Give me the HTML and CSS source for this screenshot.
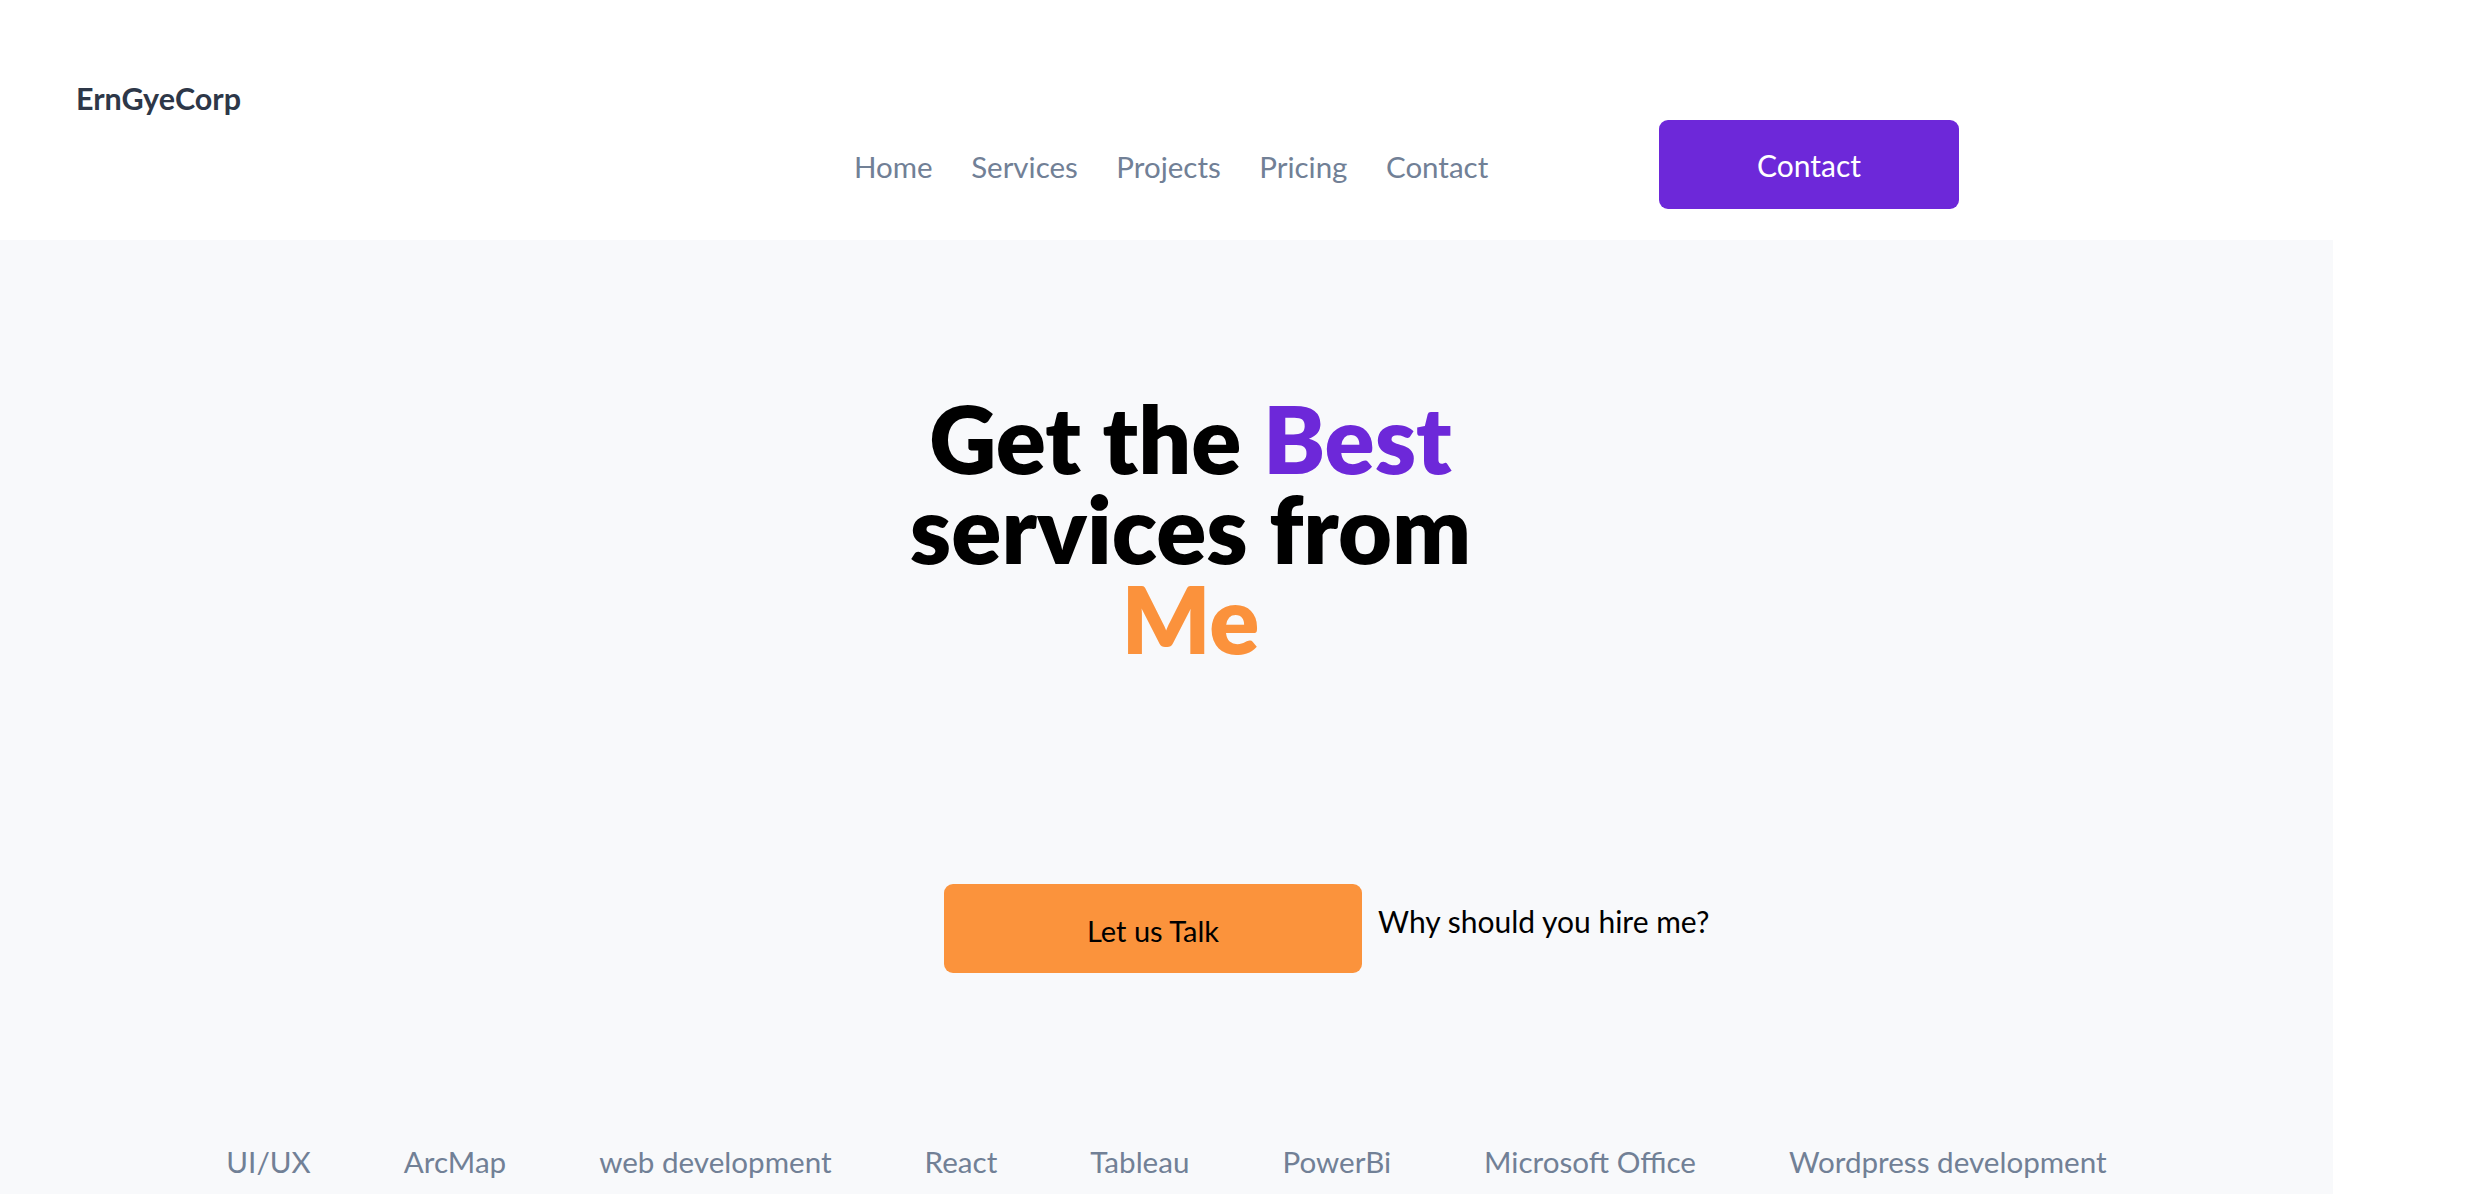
FILE: index.html
```html
<!DOCTYPE html>
<html lang="en">
<head>
<meta charset="utf-8">
<title>ErnGyeCorp</title>
<link rel="stylesheet" href="styles.css">
</head>
<body>
<header class="header">
  <div class="logo">ErnGyeCorp</div>
  <nav class="nav">
    <a href="#">Home</a>
    <a href="#">Services</a>
    <a href="#">Projects</a>
    <a href="#">Pricing</a>
    <a href="#">Contact</a>
  </nav>
  <a class="btn-contact" href="#">Contact</a>
</header>
<section class="hero">
  <h1 class="title"><span class="line">Get the <span class="purple">Best</span></span><span class="line">services from</span><span class="line orange">Me</span></h1>
  <div class="actions">
    <a class="btn-talk" href="#">Let us Talk</a>
    <span class="why">Why should you hire me?</span>
  </div>
  <ul class="skills">
    <li>UI/UX</li>
    <li>ArcMap</li>
    <li>web development</li>
    <li>React</li>
    <li>Tableau</li>
    <li>PowerBi</li>
    <li>Microsoft Office</li>
    <li>Wordpress development</li>
  </ul>
</section>
</body>
</html>
```
FILE: styles.css
```css
* { box-sizing: border-box; }
html, body { margin: 0; padding: 0; }
body {
  background: #ffffff;
  font-family: "Lato", "Open Sans", "DejaVu Sans", sans-serif;
  width: 2490px;
  overflow: hidden;
}
a { text-decoration: none; }

.header {
  height: 240px;
  display: flex;
  align-items: flex-start;
  padding-left: 76px;
}
.logo {
  margin-top: 78px;
  font-size: 30.5px;
  line-height: 40px;
  font-weight: 700;
  color: #2d3748;
  width: 778px;
}
.nav {
  margin-top: 144px;
  display: flex;
  gap: 38.5px;
  width: 805px;
}
.nav a {
  font-size: 29.5px;
  line-height: 45px;
  color: #718096;
}
.btn-contact {
  margin-top: 120px;
  width: 300px;
  height: 89px;
  border-radius: 9px;
  background: #6d28d9;
  color: #ffffff;
  font-size: 30px;
  display: flex;
  align-items: center;
  justify-content: center;
}

.hero {
  width: 2333px;
  height: 960px;
  background: #f8f9fb;
  padding-top: 153px;
}
.title {
  margin: 0 0 0 48px;
  display: flex;
  flex-direction: column;
  align-items: center;
  font-size: 93px;
  line-height: 90px;
  font-weight: 800;
  color: #000000;
}
.line { display: block; white-space: nowrap; }
.purple { color: #6d28d9; }
.orange { color: #fb923c; }

.actions {
  margin-top: 221px;
  margin-left: 944px;
  display: flex;
  align-items: flex-start;
  gap: 16px;
}
.btn-talk {
  width: 418px;
  height: 89px;
  border-radius: 9px;
  background: #fb933c;
  color: #000000;
  font-size: 29px;
  display: flex;
  align-items: center;
  justify-content: center;
  padding-top: 4px;
}
.why {
  margin-top: 17px;
  font-size: 30px;
  line-height: 40px;
  color: #000000;
}

.skills {
  list-style: none;
  margin: 166px 0 0;
  padding: 0;
  display: flex;
  justify-content: center;
  gap: 93px;
}
.skills li {
  font-size: 29.6px;
  line-height: 45px;
  color: #718096;
}
```
